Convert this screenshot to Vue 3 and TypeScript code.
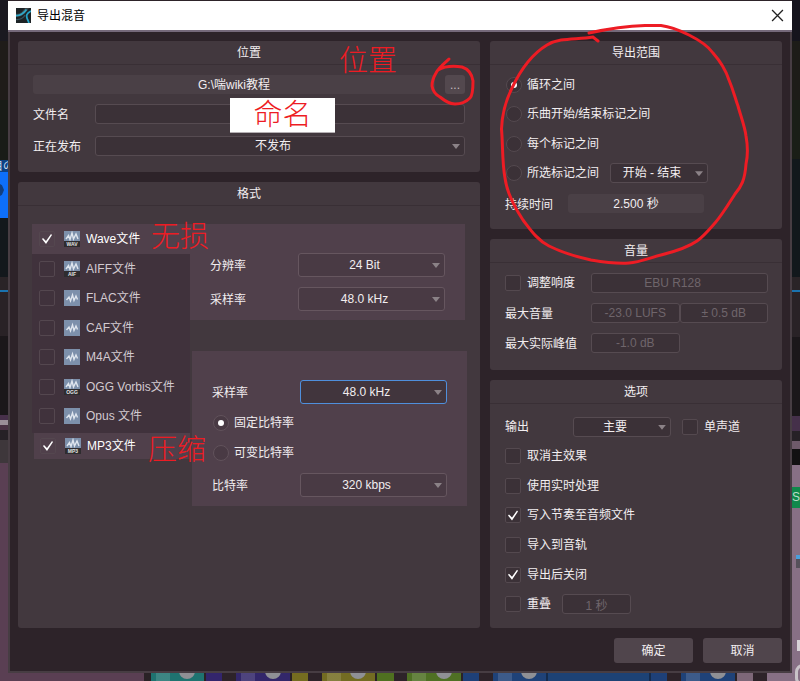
<script setup lang="ts">
import { ref } from 'vue'

interface Format {
  name: string
  tag: string
  on: boolean
}

interface Segment {
  size: number
  color: string
  kind?: string
}

const seg = (size: number, color: string, kind?: string): Segment => ({ size, color, kind })

const wave = ref<Format>({ name: 'Wave文件', tag: 'WAV', on: true })
const formats = ref<Format[]>([
  { name: 'AIFF文件', tag: 'AIF', on: false },
  { name: 'FLAC文件', tag: '', on: false },
  { name: 'CAF文件', tag: '', on: false },
  { name: 'M4A文件', tag: '', on: false },
  { name: 'OGG Vorbis文件', tag: 'OGG', on: false },
  { name: 'Opus 文件', tag: '', on: false },
])
const mp3 = ref<Format>({ name: 'MP3文件', tag: 'MP3', on: true })

const range = ref('loop')
const rateMode = ref('cbr')

const options = ref([
  { id: 'bypass', name: '取消主效果', on: false },
  { id: 'realtime', name: '使用实时处理', on: false },
  { id: 'tempo', name: '写入节奏至音频文件', on: true },
  { id: 'import', name: '导入到音轨', on: false },
  { id: 'close', name: '导出后关闭', on: true },
])

const leftStrip: Segment[] = [
  seg(41, '#1a1920'), seg(59, '#1f1c19'), seg(60, '#191c17'), seg(12, '#0d4284', 'jp'),
  seg(46, '#0d6ffa', 'clip'), seg(59, '#13181c'), seg(13, '#2a2427'), seg(2, '#1a72ae'),
  seg(44, '#292226'), seg(79, '#1b171a'), seg(5, '#47304a'), seg(5, '#9b8f98'),
  seg(5, '#4a3244'), seg(10, '#262126'), seg(23, '#3e373b'), seg(218, '#5a3f53'),
]
const rightStrip: Segment[] = [
  seg(41, '#15141d'), seg(59, '#1d1c18'), seg(59, '#1a1e17'), seg(118, '#12181c'),
  seg(13, '#2a2427'), seg(2, '#1a72ae'), seg(44, '#292226'), seg(79, '#1b171a'),
  seg(15, '#45304a'), seg(10, '#262126'), seg(8, '#6e5a6a'), seg(16, '#121112'),
  seg(22, '#877085'), seg(21, '#10894b', 'solo'), seg(47, '#877085'), seg(4, '#877085', 'chip blue'),
  seg(9, '#877085', 'chip'), seg(72, '#877085'), seg(11, '#877085', 'mark'), seg(30, '#877085', 'ring'),
]
const bottomStrip: Segment[] = [
  seg(136, '#5a3f53'), seg(7, '#2a2226'), seg(53, '#1f7370', 'knob'), seg(2, '#2a2226'),
  seg(16, '#33256c'), seg(14, '#2d2329'), seg(54, '#33276a', 'knob'), seg(2, '#2a2226'),
  seg(16, '#756d20'), seg(14, '#2d2329'), seg(53, '#736c22', 'knob'), seg(2, '#2a2226'),
  seg(17, '#4f7020'), seg(13, '#2d2329'), seg(54, '#4f7024', 'knob'), seg(2, '#2a2226'),
  seg(16, '#1e4078'), seg(14, '#2d2329'), seg(53, '#1f4278', 'knob'), seg(2, '#152b4c'),
  seg(101, '#1d4275'), seg(2, '#152b4c'), seg(16, '#1e4078'), seg(14, '#2d2329'),
  seg(54, '#1f4278', 'knob'), seg(2, '#2a2226'), seg(16, '#7d6778'), seg(14, '#2d2329'),
  seg(25, '#877085'),
]
</script>

<template>
  <div class="desktop">
    <div class="strip side">
      <div
        v-for="(s, i) in leftStrip"
        :key="i"
        class="seg"
        :class="s.kind"
        :style="{ flexGrow: s.size, background: s.color }"
      >
        <span v-if="s.kind === 'jp'">目の</span>
      </div>
    </div>

    <div class="middle">
      <main class="dialog">
        <header class="titlebar">
          <svg class="logo" viewBox="0 0 15 15" aria-hidden="true">
            <rect width="15" height="15" fill="#1d2326" />
            <path d="M0 5.500C4 6.500 6 4 9 0H13C10 5 6 9.500 0 8.500Z" fill="#3b4347" />
            <path d="M0 7.500C4 8 7.500 5.500 10.500 1.500" fill="none" stroke="#2fa9c9" stroke-width="1.800" />
            <path d="M15 3C10.500 5 9.500 8 12 12.500L13 15" fill="none" stroke="#23a4c8" stroke-width="1.800" />
            <path d="M0 11.500C4 12 8 10 9 7" fill="none" stroke="#32535e" stroke-width="1.200" />
          </svg>
          <h1>导出混音</h1>
          <button class="close" type="button" aria-label="关闭">
            <svg viewBox="0 0 12 12" aria-hidden="true">
              <path d="M1 1L11 11M11 1L1 11" stroke="#222" stroke-width="1.200" />
            </svg>
          </button>
        </header>

        <div class="body">
          <div class="columns">
            <div class="column">
              <section class="panel">
                <h2>位置</h2>
                <span class="note note-place">位置</span>
                <div class="location">
                  <div class="path-row">
                    <output class="value">G:\喘wiki教程</output>
                    <span class="browse-wrap">
                      <button class="browse" type="button">...</button>
                      <svg class="small-loop" viewBox="0 0 46 52" aria-hidden="true">
                        <path d="M19 4C15 8 9 12 6 18C3 23 2 27 2 31C3 37 6 40 10 42C15 46 19 49 25 49C31 49 37 46 40 43C43 40 43 32 43 26C42 19 38 14 32 12C25 11 15 11 8 15" />
                      </svg>
                    </span>
                  </div>
                  <div class="fields">
                    <label for="file">文件名</label>
                    <span class="named">
                      <input id="file" class="box" type="text" />
                      <span class="note note-name">命名</span>
                    </span>
                    <label for="publish">正在发布</label>
                    <span class="drop">
                      <select id="publish"><option>不发布</option></select>
                    </span>
                  </div>
                </div>
              </section>

              <section class="panel grow">
                <h2>格式</h2>
                <div class="formats">
                  <div class="list">
                    <label class="format lit">
                      <input v-model="wave.on" type="checkbox" />
                      <svg class="ficon" viewBox="0 0 16 16" aria-hidden="true">
                        <rect width="16" height="16" fill="#7d90ab" />
                        <path d="M2 8L4.500 4.500L6 8.500L8 2L9.500 8L12 3L14 8" />
                        <rect y="10" width="16" height="6" fill="#2e2c2f" />
                        <text x="8" y="15">{{ wave.tag }}</text>
                      </svg>
                      {{ wave.name }}
                      <span class="note note-lossless">无损</span>
                    </label>
                    <div class="dim">
                      <label v-for="f in formats" :key="f.name" class="format">
                        <input v-model="f.on" type="checkbox" />
                        <svg class="ficon" viewBox="0 0 16 16" aria-hidden="true">
                          <rect width="16" height="16" fill="#7d90ab" />
                          <template v-if="f.tag">
                            <path d="M2 8L4.500 4.500L6 8.500L8 2L9.500 8L12 3L14 8" />
                            <rect y="10" width="16" height="6" fill="#2e2c2f" />
                            <text x="8" y="15">{{ f.tag }}</text>
                          </template>
                          <path v-else d="M2.500 10L5 7L6.500 11L8.500 5L10 10.500L12 6L13.500 9.500" />
                        </svg>
                        {{ f.name }}
                      </label>
                    </div>
                    <label class="format lit last">
                      <input v-model="mp3.on" type="checkbox" />
                      <svg class="ficon" viewBox="0 0 16 16" aria-hidden="true">
                        <rect width="16" height="16" fill="#7d90ab" />
                        <path d="M2 8L4.500 4.500L6 8.500L8 2L9.500 8L12 3L14 8" />
                        <rect y="10" width="16" height="6" fill="#2e2c2f" />
                        <text x="8" y="15">{{ mp3.tag }}</text>
                      </svg>
                      {{ mp3.name }}
                      <span class="note note-lossy">压缩</span>
                    </label>
                  </div>

                  <div class="details">
                    <div class="settings">
                      <div class="pair">
                        <label for="depth">分辨率</label>
                        <span class="drop tall"><select id="depth"><option>24 Bit</option></select></span>
                      </div>
                      <div class="pair spaced">
                        <label for="rate1">采样率</label>
                        <span class="drop tall"><select id="rate1"><option>48.0 kHz</option></select></span>
                      </div>
                    </div>
                    <div class="settings second">
                      <div class="pair">
                        <label for="rate2">采样率</label>
                        <span class="drop tall focus"><select id="rate2"><option>48.0 kHz</option></select></span>
                      </div>
                      <div class="modes">
                        <label class="choice"><input v-model="rateMode" type="radio" name="mode" value="cbr" />固定比特率</label>
                        <label class="choice"><input v-model="rateMode" type="radio" name="mode" value="vbr" />可变比特率</label>
                      </div>
                      <div class="pair">
                        <label for="bitrate">比特率</label>
                        <span class="drop tall"><select id="bitrate"><option>320 kbps</option></select></span>
                      </div>
                    </div>
                  </div>
                </div>
              </section>
            </div>

            <div class="column">
              <section class="panel">
                <h2>导出范围</h2>
                <div class="range">
                  <div class="ranges">
                    <label class="choice"><input v-model="range" type="radio" name="range" value="loop" />循环之间</label>
                    <label class="choice"><input v-model="range" type="radio" name="range" value="song" />乐曲开始/结束标记之间</label>
                    <label class="choice"><input v-model="range" type="radio" name="range" value="each" />每个标记之间</label>
                    <div class="line">
                      <label class="choice"><input v-model="range" type="radio" name="range" value="picked" />所选标记之间</label>
                      <span class="drop narrow"><select aria-label="标记"><option>开始 - 结束</option></select></span>
                    </div>
                  </div>
                  <div class="duration">
                    <span>持续时间</span>
                    <output class="value">2.500 秒</output>
                  </div>
                </div>
                <svg class="big-loop" viewBox="0 0 260 250" aria-hidden="true">
                  <path d="M94 17C112 13 132 10 150 9.500H166C178 11 186 15 194 19C206 25 213 30 218 37C226 46 231 55 234 64C239 76 240 82 243 90C246 101 250 111 251 120C253 131 253 139 251 148C250 164 246 171 240 178C233 189 227 199 220 207C213 215 208 221 202 225C192 232 178 236 166 239C154 242 145 246 134 247C122 248 108 246 96 244C78 240 66 236 54 230C42 224 35 213 28 204C20 192 12 177 10 162C7 146 8 130 6.500 113C7 99 10 86 17 72C25 55 37 38 52 29C66 21 81 24 98 21L103 25" />
                </svg>
              </section>

              <section class="panel">
                <h2>音量</h2>
                <div class="volume">
                  <label class="choice"><input type="checkbox" />调整响度</label>
                  <input class="box wide" value="EBU R128" aria-label="响度标准" disabled />
                  <label for="lufs">最大音量</label>
                  <input id="lufs" class="box" value="-23.0 LUFS" disabled />
                  <input class="box" value="± 0.5 dB" aria-label="容差" disabled />
                  <label for="peak">最大实际峰值</label>
                  <input id="peak" class="box" value="-1.0 dB" disabled />
                </div>
              </section>

              <section class="panel grow">
                <h2>选项</h2>
                <div class="options">
                  <div class="line">
                    <label class="out" for="out">输出</label>
                    <span class="drop narrow"><select id="out"><option>主要</option></select></span>
                    <label class="choice"><input type="checkbox" />单声道</label>
                  </div>
                  <label v-for="o in options" :key="o.id" class="choice">
                    <input v-model="o.on" type="checkbox" />{{ o.name }}
                  </label>
                  <div class="line">
                    <label class="choice"><input type="checkbox" />重叠</label>
                    <input class="box overlap" value="1 秒" aria-label="重叠时间" disabled />
                  </div>
                </div>
              </section>
            </div>
          </div>

          <footer class="actions">
            <button type="button">确定</button>
            <button type="button">取消</button>
          </footer>
        </div>
      </main>

      <div class="strip foot">
        <div
          v-for="(s, i) in bottomStrip"
          :key="i"
          class="seg"
          :class="s.kind"
          :style="{ flexGrow: s.size, backgroundColor: s.color }"
        ></div>
      </div>
    </div>

    <div class="strip side">
      <div
        v-for="(s, i) in rightStrip"
        :key="i"
        class="seg"
        :class="s.kind"
        :style="{ flexGrow: s.size, background: s.color }"
      >
        <span v-if="s.kind === 'solo'">S</span>
      </div>
    </div>
  </div>
</template>

<style>
body {
  background: #2d2329;
}
</style>

<style scoped>
* {
  box-sizing: border-box;
}

.desktop {
  display: grid;
  grid-template-columns: 8px minmax(0, 1fr) 8px;
  min-height: 100vh;
  font: 12px/16px "Liberation Sans", "Noto Sans CJK SC", sans-serif;
  color: #f2eef0;
  overflow: hidden;
}

input,
select,
button,
output {
  font: inherit;
  color: inherit;
}

/* project window showing round the dialog */
.strip {
  display: flex;
  overflow: hidden;
}

.side {
  flex-direction: column;
}

.foot {
  flex: 1;
  min-height: 8px;
}

.seg {
  flex: 0 1 0;
  min-width: 0;
  min-height: 0;
  overflow: hidden;
  position: relative;
}

.jp {
  font-size: 11px;
  line-height: 12px;
  color: #cfdcec;
  white-space: nowrap;
}

.jp span {
  display: block;
  margin-left: -8px;
}

.clip::after {
  content: "";
  position: absolute;
  left: 0;
  top: 12px;
  width: 4px;
  height: 12px;
  background: #123f80;
  clip-path: polygon(0 0, 50% 10%, 100% 50%, 50% 90%, 0 100%);
}

.solo {
  font-size: 12px;
  line-height: 21px;
  color: #b9dcc8;
}

.chip::after,
.mark::after {
  content: "";
  position: absolute;
  inset: 0 0 0 4px;
  background: #55505a;
}

.blue::after {
  background: #4aa0dc;
}

.mark::after {
  left: 5px;
  background: #d8d3d7;
}

.ring::after {
  content: "";
  position: absolute;
  left: 3px;
  top: 13px;
  width: 16px;
  height: 16px;
  border: 3px solid #c9c3c8;
  border-radius: 8px;
}

.knob {
  background-image: linear-gradient(90deg, transparent 5px, #ffffff22 5px, #ffffff22 19px, transparent 19px);
}

.knob::after {
  content: "";
  position: absolute;
  right: 9px;
  bottom: 2px;
  width: 16px;
  height: 16px;
  border-radius: 8px;
  background: #8f9095;
}

.middle {
  display: flex;
  flex-direction: column;
  padding-top: 1px;
}

/* dialog frame */
.titlebar {
  display: flex;
  align-items: center;
  gap: 6px;
  height: 31px;
  padding: 0 8px;
  background: #fff;
  border-bottom: 2px solid #75697a;
  color: #000;
}

.logo {
  width: 15px;
  height: 15px;
}

h1 {
  flex: 1;
  margin: 0;
  font-size: 12px;
  font-weight: 400;
}

.close {
  display: flex;
  padding: 0;
  border: 0;
  background: none;
}

.close svg {
  width: 13px;
  height: 13px;
}

.body {
  display: flex;
  flex-direction: column;
  gap: 10px;
  padding: 9px 8px 8px;
  background: #2d2329;
  border: solid #473d43;
  border-width: 0 2px 2px;
}

.columns {
  display: grid;
  grid-template-columns: minmax(0, 462fr) minmax(0, 292fr);
  gap: 10px;
}

.column {
  display: flex;
  flex-direction: column;
  gap: 10px;
}

.panel {
  position: relative;
  background: #42383e;
  border-radius: 3px;
}

.grow {
  flex: 1;
}

h2 {
  margin: 0;
  height: 24px;
  border-bottom: 1px solid #392f35;
  font-size: 12px;
  font-weight: 400;
  line-height: 24px;
  text-align: center;
}

/* controls */
.value {
  height: 19px;
  background: #4a4046;
  border-radius: 3px;
  line-height: 20px;
  text-align: center;
}

.box {
  width: 100%;
  min-width: 0;
  height: 20px;
  padding: 0 6px;
  background: #3b3137;
  border: 1px solid #564b51;
  border-radius: 3px;
}

.box:disabled {
  color: #6f656b;
  text-align: center;
}

.drop {
  position: relative;
  display: flex;
  height: 20px;
}

.drop.tall {
  height: 24px;
}

.drop.narrow {
  width: 98px;
}

.drop select {
  width: 100%;
  padding: 0 14px 0 0;
  appearance: none;
  background: #3b3137;
  border: 1px solid #564b51;
  border-radius: 3px;
  text-align: center;
  text-align-last: center;
  outline: none;
}

.drop::after {
  content: "";
  position: absolute;
  right: 5px;
  top: calc(50% - 2px);
  width: 8px;
  height: 5px;
  background: #8b8287;
  clip-path: polygon(0 0, 100% 0, 50% 100%);
  pointer-events: none;
}

.settings .drop select {
  background: #493a44;
  border-color: #66565f;
}

.settings .focus select {
  background: #41353d;
  border-color: #4f8fdc;
}

input[type="checkbox"],
input[type="radio"] {
  position: relative;
  flex: none;
  width: 16px;
  height: 16px;
  margin: 0;
  appearance: none;
  background: #3b3137;
  border: 1px solid #54494f;
  border-radius: 2px;
}

input[type="radio"] {
  border-radius: 8px;
}

input[type="checkbox"]:checked::after {
  content: "";
  position: absolute;
  inset: 0;
  background: #fff;
  clip-path: polygon(2px 7px, 3px 6px, 6px 9px, 11px 2px, 12px 3px, 6px 12px);
}

input[type="radio"]:checked::after {
  content: "";
  position: absolute;
  left: 4px;
  top: 4px;
  width: 6px;
  height: 6px;
  border-radius: 3px;
  background: #fff;
}

.choice {
  display: flex;
  align-items: center;
  gap: 5px;
  padding-left: 1px;
  white-space: nowrap;
}

.line {
  display: flex;
  align-items: center;
  gap: 11px;
}

/* location */
.location {
  padding: 10px 15px 16px;
}

.path-row {
  display: flex;
  gap: 10px;
}

.path-row .value {
  flex: 1;
}

.browse-wrap {
  position: relative;
  display: flex;
}

.browse {
  width: 20px;
  padding: 0;
  background: #53484e;
  border: 0;
  border-radius: 3px;
  color: #c4bdc1;
}

.fields {
  display: grid;
  grid-template-columns: 62px minmax(0, 1fr);
  align-items: center;
  row-gap: 12px;
  margin-top: 10px;
}

.fields label,
.pair label,
.volume label:not(.choice),
.duration span {
  padding-top: 2px;
}

.named {
  position: relative;
  display: flex;
}

/* formats */
.formats {
  display: grid;
  grid-template-columns: 158px minmax(0, 1fr);
  padding: 18px 13px 16px 14px;
}

.format {
  display: flex;
  align-items: center;
  padding-left: 7px;
  color: #d2cad0;
  white-space: nowrap;
}

.ficon {
  width: 16px;
  height: 16px;
  margin: 0 6px 0 9px;
}

.ficon path {
  fill: none;
  stroke: #dfe5ee;
  stroke-width: 1.4;
}

.ficon text {
  font: bold 5px "Liberation Sans", sans-serif;
  fill: #e4e4e4;
  text-anchor: middle;
}

.format input[type="checkbox"] {
  background: transparent;
  border-color: #54474f;
}

.lit {
  position: relative;
  min-height: 30px;
  background: #50404b;
  color: #fff;
}

.dim {
  display: grid;
  grid-auto-rows: 1fr;
  min-height: 179px;
  padding-bottom: 2px;
  background: #40323c;
}

.last {
  min-height: 26px;
  margin-left: 2px;
  padding-left: 6px;
}

.details {
  display: flex;
  flex-direction: column;
  gap: 31px;
}

.settings {
  margin-right: 2px;
  padding: 29px 20px 9px;
  background: #50404b;
}

.second {
  margin: 0 0 0 2px;
}

.pair {
  display: grid;
  grid-template-columns: 88px minmax(0, 1fr);
  align-items: center;
}

.spaced {
  margin-top: 10px;
}

.modes {
  display: grid;
  grid-auto-rows: 30px;
  margin: 4px 0 5px;
}

.settings input[type="radio"] {
  background: #493a44;
  border-color: #61525b;
}

/* right column */
.range {
  padding: 5px 15px 16px;
}

.ranges {
  display: grid;
  grid-auto-rows: 1fr;
  min-height: 118px;
}

.duration {
  display: grid;
  grid-template-columns: 63px 136px;
  align-items: center;
  margin-top: 6px;
}

.volume {
  display: grid;
  grid-template-columns: 86px minmax(0, 1fr) minmax(0, 1fr);
  align-items: center;
  row-gap: 10px;
  padding: 10px 14px 17px 15px;
  white-space: nowrap;
}

.wide {
  grid-column: span 2;
  padding-right: 20px;
}

.volume .choice,
.options .choice {
  padding-left: 0;
  gap: 6px;
}

.options {
  display: grid;
  grid-auto-rows: 1fr;
  min-height: 224px;
  padding: 8px 15px 9px;
}

.out {
  width: 57px;
}

.overlap {
  width: 69px;
}

.actions {
  display: flex;
  justify-content: flex-end;
  gap: 10px;
}

.actions button {
  width: 79px;
  height: 25px;
  padding: 0;
  background: #50454c;
  border: 0;
  border-radius: 3px;
}

/* red marker notes */
.note {
  position: absolute;
  z-index: 2;
  color: #ed1c24;
  font-size: 29px;
  font-weight: 300;
  line-height: 34px;
  white-space: nowrap;
  pointer-events: none;
}

.note-place {
  left: 321px;
  top: 3px;
}

.note-name {
  left: 135px;
  top: -6px;
  width: 105px;
  background: #fff;
  border-bottom: 1px solid #b5b0b3;
  text-align: center;
}

.note-lossless {
  left: 119px;
  top: -4px;
}

.note-lossy {
  left: 114px;
  top: 0;
}

.small-loop,
.big-loop {
  position: absolute;
  z-index: 3;
  fill: none;
  stroke: #ed1c24;
  stroke-width: 3;
  stroke-linecap: round;
  pointer-events: none;
}

.small-loop {
  left: -15px;
  top: -20px;
  width: 46px;
  height: 52px;
}

.big-loop {
  left: 5px;
  top: -25px;
  width: 260px;
  height: 250px;
}
</style>
